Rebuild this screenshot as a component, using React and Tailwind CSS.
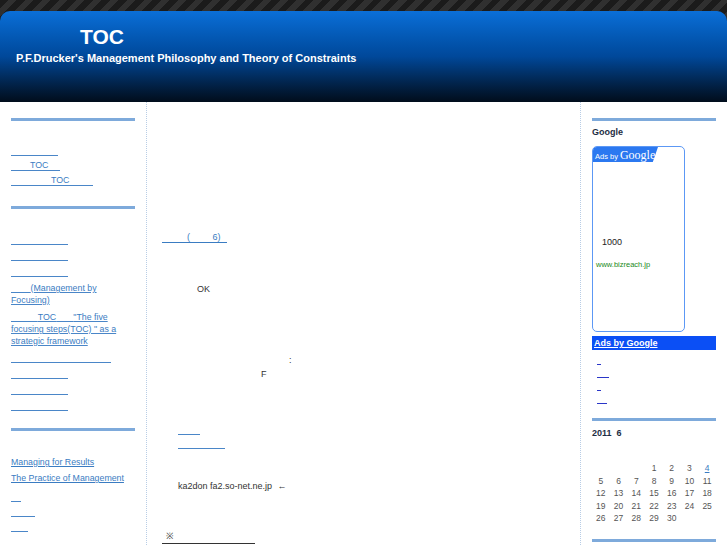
import React from "react";

const font = { fontFamily: '"Liberation Sans", Arial, sans-serif' };

// underlined link whose CJK text is missing: keep width and underline
const U = ({ w, pl = 0, children, color = "border-[#4a86c8]", className = "" }) => (
  <span
    className={`inline-block border-b ${color} leading-[10px] h-[11px] ${className}`}
    style={{ width: w, paddingLeft: pl }}
  >
    {children}
  </span>
);

const Bar = ({ className = "" }) => (
  <div className={`h-[3px] bg-[#7eaadb] ${className}`} />
);

const cal = [
  ["", "", "", "1", "2", "3", "4"],
  ["5", "6", "7", "8", "9", "10", "11"],
  ["12", "13", "14", "15", "16", "17", "18"],
  ["19", "20", "21", "22", "23", "24", "25"],
  ["26", "27", "28", "29", "30", "", ""],
];

export default function App() {
  return (
    <div className="w-[727px] h-[545px] overflow-hidden bg-white" style={font}>
      {/* Header */}
      <div className="pt-[11px] bg-[repeating-linear-gradient(135deg,#1b1b1b_0px,#1b1b1b_6px,#303030_6px,#303030_12px)]">
        <div className="h-[91px] rounded-t-[10px] bg-gradient-to-b from-[#0b6fd8] via-[#00489a] to-[#010d1c] pt-[14px]">
          <div className="pl-[80px] text-white font-bold text-[21px] leading-[24px]">TOC</div>
          <div className="pl-[16px] mt-[2px] text-white font-bold text-[11px] leading-[14px]">
            P.F.Drucker's Management Philosophy and Theory of Constraints
          </div>
        </div>
      </div>

      {/* Body */}
      <div className="flex h-[443px]">
        {/* Left */}
        <div className="w-[147px] shrink-0 border-r border-dotted border-[#b8cde6] pl-[11px] pr-[11px] pt-[16px] text-[8.8px] text-[#3a7cc2]">
          <Bar />
          <div className="pt-[24px] flex flex-col gap-[4px] items-start">
            <U w={47} />
            <U w={49} pl={19}>TOC</U>
            <U w={82} pl={40}>TOC</U>
          </div>
          <Bar className="mt-[20px]" />
          <div className="pt-[25px] flex flex-col gap-[5px] items-start leading-[12px]">
            <U w={57} />
            <U w={57} />
            <U w={57} />
            <span className="underline decoration-[#4a86c8]">
              <span className="whitespace-pre">{"        "}</span>(Management by Focusing)
            </span>
            <span className="underline decoration-[#4a86c8]">
              <span className="whitespace-pre">{"           "}</span>TOC<span className="whitespace-pre">{"       "}</span>"The five focusing steps(TOC) " as a strategic framework
            </span>
            <U w={100} />
            <U w={57} />
            <U w={57} />
            <U w={57} />
          </div>
          <Bar className="mt-[17px]" />
          <div className="pt-[25px] flex flex-col gap-[4px] items-start leading-[12px]">
            <span className="underline">Managing for Results</span>
            <span className="underline">The Practice of Management</span>
            <U w={10} className="mt-[3px]" />
            <U w={24} />
            <U w={17} />
          </div>
        </div>

        {/* Main */}
        <div className="flex-1 pl-[15px] pt-[129px] text-[9px] text-[#333]">
          <div>
            <U w={65} color="border-[#3a7cc2]" className="text-[#3a7cc2]">
              <span className="whitespace-pre">{"          (         6)"}</span>
            </U>
          </div>
          <div className="pl-[35px] mt-[38px] leading-[12px]">OK</div>
          <div className="pl-[127px] mt-[59px] leading-[12px]">:</div>
          <div className="pl-[99px] mt-[2px] leading-[12px]">F</div>
          <div className="pl-[16px] mt-[44px] flex flex-col items-start gap-[3px]">
            <U w={22} />
            <U w={47} />
          </div>
          <div className="pl-[16px] mt-[31px] leading-[12px]">
            ka2don fa2.so-net.ne.jp <span className="ml-[3px]">←</span>
          </div>
          <div className="mt-[38px] leading-[12px]">
            <span className="inline-block w-[93px] border-b border-[#333] pl-[4px] pb-[1px]">※</span>
          </div>
        </div>

        {/* Right */}
        <div className="w-[147px] shrink-0 border-l border-dotted border-[#b8cde6] pl-[11px] pr-[11px] pt-[16px] text-[9px]">
          <Bar />
          <div className="mt-[5px] font-bold text-[#1d2d44] leading-[12px]">Google</div>
          <div className="mt-[8px] w-[93px] h-[186px] border border-[#5c98f5] rounded-[5px] overflow-hidden relative">
            <div className="h-[15px] w-[65px] bg-[#2b78f0] text-white flex items-end gap-[2px] pl-[2px] [clip-path:polygon(0_0,100%_0,92%_100%,0_100%)]">
              <span className="text-[7.5px] leading-[11px]">Ads by</span>
              <span className="text-[12px] leading-[14px]" style={{ fontFamily: '"Liberation Serif", serif' }}>Google</span>
            </div>
            <div className="pl-[9px] mt-[74px] text-[9px] text-[#222] leading-[12px]">1000</div>
            <div className="pl-[3px] mt-[12px] text-[7.5px] text-[#1a8a1a] leading-[10px]">www.bizreach.jp</div>
          </div>
          <div className="mt-[4px] h-[14px] bg-[#0b4ff5] pl-[2px]">
            <span className="text-white font-bold underline leading-[14px]">Ads by Google</span>
          </div>
          <div className="pl-[5px] pt-[4px] flex flex-col items-start gap-[2px]">
            <U w={4} color="border-[#2a36c8]" />
            <U w={12} color="border-[#2a36c8]" />
            <U w={4} color="border-[#2a36c8]" />
            <U w={10} color="border-[#2a36c8]" />
          </div>
          <Bar className="mt-[14px]" />
          <div className="mt-[6px] font-bold text-[#1d2d44] leading-[12px] whitespace-pre">2011  6</div>
          <div className="mt-[23px] grid grid-cols-7 text-[8.5px] text-[#555] leading-[12.5px] text-center">
            {cal.flat().map((d, i) => (
              <span key={i} className={d === "4" ? "text-[#3a7cc2] underline" : ""}>
                {d}
              </span>
            ))}
          </div>
          <Bar className="mt-[14px]" />
        </div>
      </div>
    </div>
  );
}
